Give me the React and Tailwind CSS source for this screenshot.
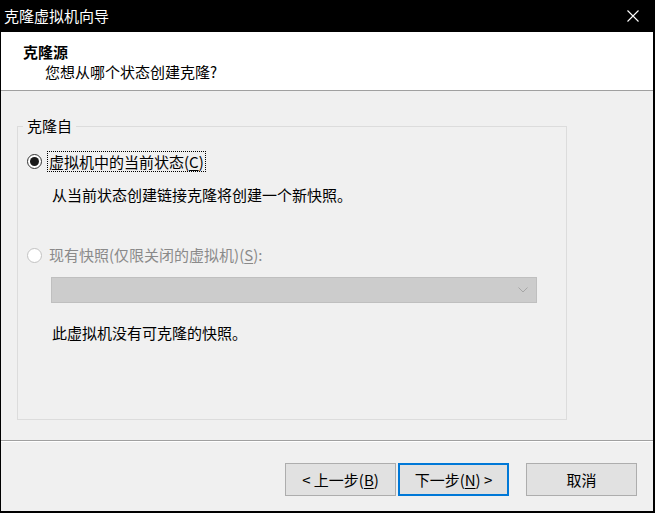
const font = { fontFamily: '"Microsoft YaHei UI", "Noto Sans CJK SC", sans-serif' }

function Radio({ checked, disabled }) {
  return (
    <span
      className={`flex items-center justify-center w-[15px] h-[15px] rounded-full border bg-white shrink-0 ${
        disabled ? 'border-[#c2c2c2]' : 'border-[#333333]'
      }`}
    >
      {checked && <span className="w-[9px] h-[9px] rounded-full bg-[#1a1a1a]" />}
    </span>
  )
}

function Button({ children, primary }) {
  return (
    <button
      className={`w-[111px] h-[33px] bg-[#e1e1e1] text-[15px] text-black flex items-center justify-center ${
        primary ? 'border-2 border-[#0078d7]' : 'border border-[#adadad]'
      }`}
    >
      {children}
    </button>
  )
}

export default function App() {
  return (
    <div
      className="w-[655px] h-[513px] bg-black pl-px pr-[2px] pb-[2px] flex flex-col text-[15px] leading-[20px] text-black"
      style={font}
    >
      <div className="h-[32px] flex items-center justify-between shrink-0">
        <span className="ml-[3px] text-white">克隆虚拟机向导</span>
        <svg className="mr-[14px]" width="12" height="12" viewBox="0 0 12 12">
          <path d="M0.5 0.5 L11.5 11.5 M11.5 0.5 L0.5 11.5" stroke="#fff" strokeWidth="1.1" />
        </svg>
      </div>

      <div className="h-[59px] bg-white border-b border-[#a0a0a0] pt-[10px] shrink-0">
        <p className="ml-[22px] font-bold">克隆源</p>
        <p className="ml-[44px]">您想从哪个状态创建克隆?</p>
      </div>

      <div className="flex-1 bg-[#f0f0f0] pt-[25px]">
        <fieldset className="ml-[16px] w-[550px] h-[304px] border border-[#dcdcdc] pl-[9px]">
          <legend className="ml-[-4px] px-[4px]">克隆自</legend>

          <div className="mt-[14px] flex items-center h-[22px]">
            <Radio checked />
            <span className="ml-[5px] border border-dotted border-black px-px leading-[19px]">
              虚拟机中的当前状态(<span className="underline underline-offset-2">C</span>)
            </span>
          </div>
          <p className="mt-[13px] ml-[25px]">从当前状态创建链接克隆将创建一个新快照。</p>

          <div className="mt-[39px] flex items-center h-[22px]">
            <Radio disabled />
            <span className="ml-[6px] text-[#8a8a8a] px-px">
              现有快照(仅限关闭的虚拟机)(<span className="underline underline-offset-2">S</span>):
            </span>
          </div>

          <div className="mt-[11px] ml-[24px] w-[486px] h-[26px] bg-[#cccccc] border border-[#bfbfbf] flex items-center justify-end pr-[8px]">
            <svg width="10" height="6" viewBox="0 0 10 6">
              <path d="M0.5 0.5 L5 5 L9.5 0.5" stroke="#a6a6a6" strokeWidth="1" fill="none" />
            </svg>
          </div>

          <p className="mt-[20px] ml-[25px]">此虚拟机没有可克隆的快照。</p>
        </fieldset>
      </div>

      <div className="h-px bg-[#a0a0a0] shrink-0" />
      <div className="h-px bg-white shrink-0" />

      <div className="h-[69px] bg-[#f0f0f0] pt-[21px] pr-[16px] flex justify-end items-start shrink-0">
        <Button>
          &lt; 上一步(<span className="underline underline-offset-2">B</span>)
        </Button>
        <div className="ml-[2px]">
          <Button primary>
            下一步(<span className="underline underline-offset-2">N</span>) &gt;
          </Button>
        </div>
        <div className="ml-[17px]">
          <Button>取消</Button>
        </div>
      </div>
    </div>
  )
}
